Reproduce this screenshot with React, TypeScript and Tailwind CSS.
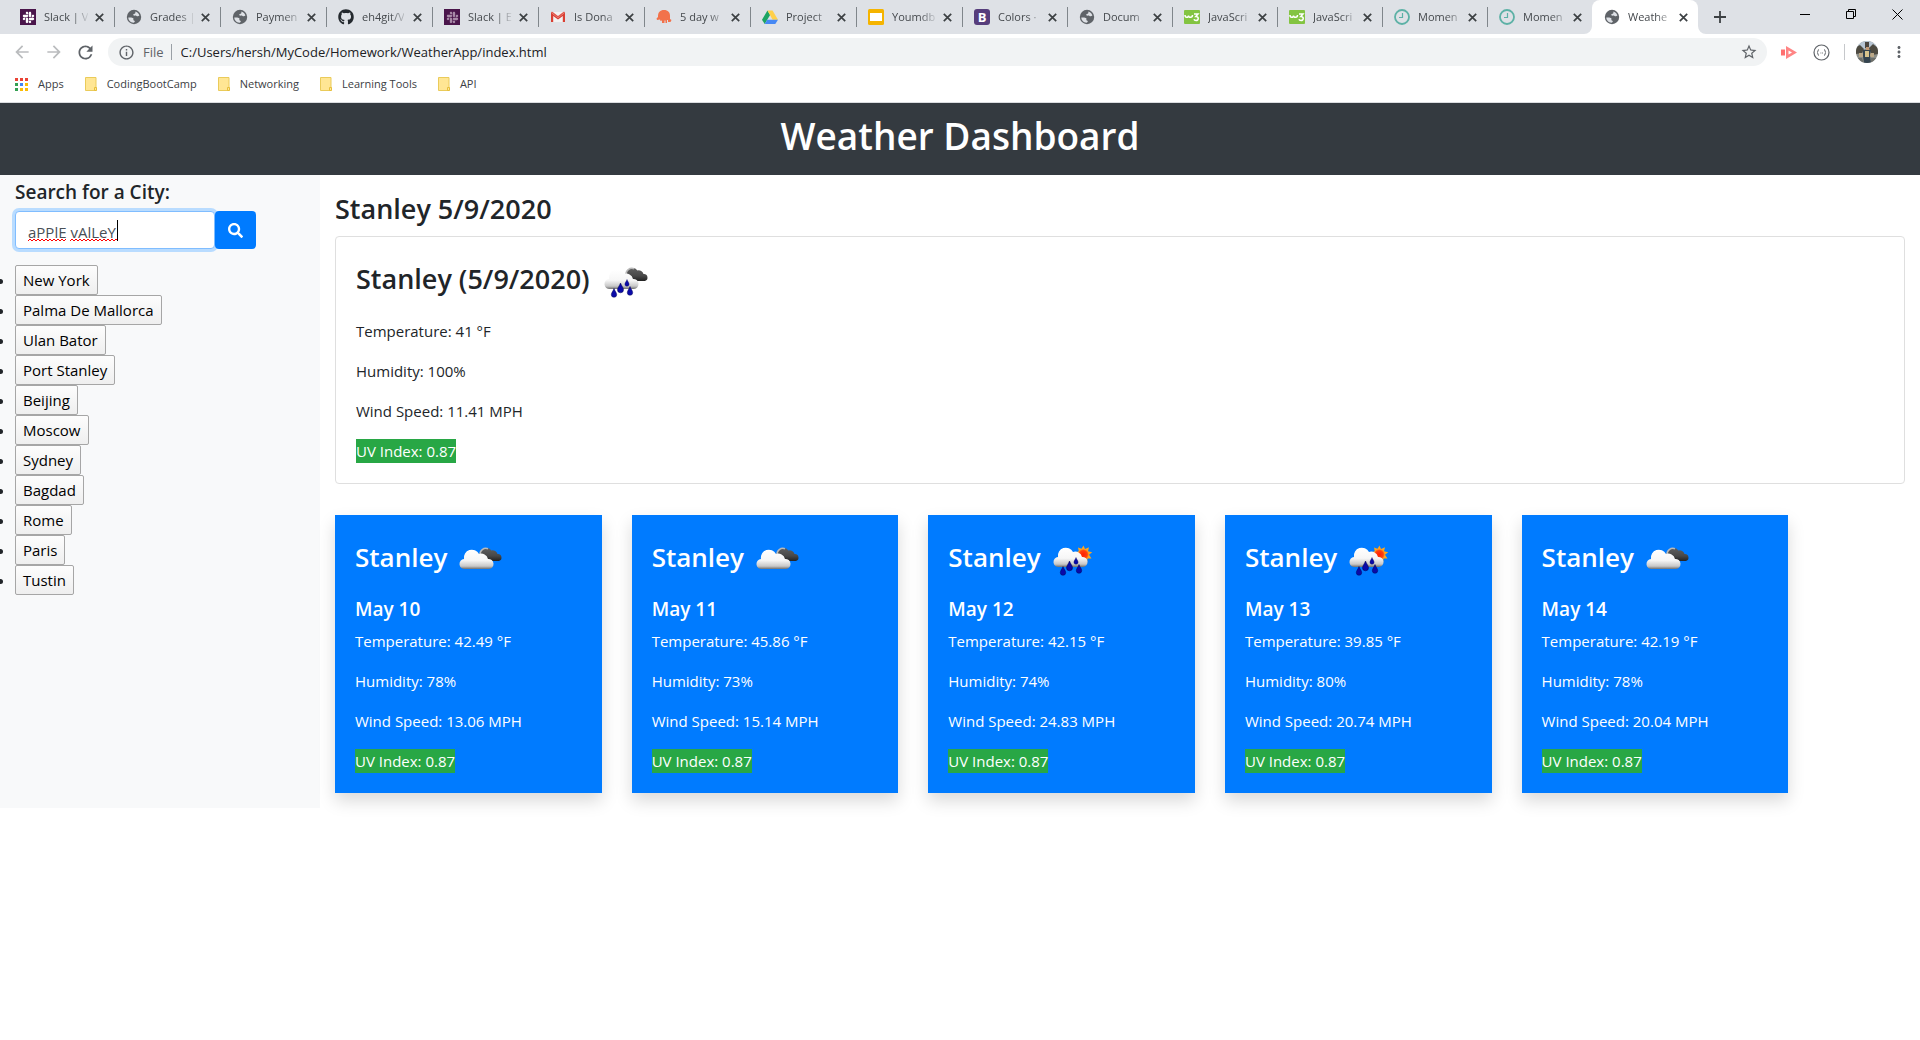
import { useId, type ReactNode } from 'react';
import { FaGithub, FaSlack, FaSearch } from 'react-icons/fa';
import { MdArrowBack, MdArrowForward, MdRefresh, MdStarBorder, MdInfoOutline, MdMoreVert } from 'react-icons/md';

function SlackIcon({ dim }: { dim?: boolean }) {
  return (
    <span className="flex size-4 items-center justify-center bg-[#4a154b]">
      <FaSlack size={13} color={dim ? '#a88aa8' : '#ffffff'} />
    </span>
  );
}

function GlobeIcon() {
  return (
    <svg width="16" height="16" viewBox="0 0 16 16">
      <circle cx="8" cy="8" r="7.200" fill="#5f6368" />
      <path d="M2.300 8.600C4 8.200 6.500 8.300 7.300 9.300c.5.800-.3 1.300.2 1.900.4.500 1.500.3 1.300 1.300-.1.600-.7 1-1.300 1.300C4.500 13.500 2.300 11.300 2.300 8.600z" fill="#dee1e6" />
      <path d="M9.500 2.500c2 .6 3.400 2.200 3.900 4.100-.9.700-2 .9-2.900.3-.8-.5-1.300-.2-2.200-.2-1-.1-1.300-1-.7-1.600.5-.5 1.400-.3 1.700-.9.300-.5-.1-1.100.2-1.700z" fill="#dee1e6" />
    </svg>
  );
}

function GithubIcon() {
  return <FaGithub size={16} color="#24292e" />;
}

function GmailIcon() {
  return (
    <svg width="16" height="16" viewBox="0 0 16 16">
      <path d="M2 3h12v10H2z" fill="#f2f2f2" />
      <path d="M1 13V3.500L8 9l7-5.500V13h-2.200V7L8 10.600 3.200 7v6z" fill="#d93f33" />
      <path d="M1 3.500C1 2.500 2 2.500 2.700 3L8 7l5.300-4C14 2.500 15 2.500 15 3.500L8 9z" fill="#e2574c" />
    </svg>
  );
}

function PostmanIcon() {
  return (
    <svg width="16" height="16" viewBox="0 0 16 16">
      <path d="M8 1c4 0 6 2.500 6 6v3l1.500 1-1 2H12v-2h-1v3H9.500v-2.500h-1V14H6v-2.500L4.500 12 4 10.500 1 11 .5 9.500 2 8V7c0-3.500 2-6 6-6z" fill="#f2724b" />
    </svg>
  );
}

function DriveIcon() {
  return (
    <svg width="16" height="16" viewBox="0 0 17 16">
      <path d="M5.800 1 0 11l2.900 4.500 5.700-9.700z" fill="#1da462" />
      <path d="M5.800 1h5.400L17 11h-5.700z" fill="#ffd04b" />
      <path d="M5.600 11H17l-2.900 4.500H2.900z" fill="#4688f4" />
    </svg>
  );
}

function SlidesIcon() {
  return (
    <svg width="16" height="16" viewBox="0 0 16 16">
      <rect width="16" height="16" rx="1.500" fill="#f5b400" />
      <rect x="2" y="4" width="12" height="8" fill="#fff" />
    </svg>
  );
}

function BootstrapIcon() {
  return (
    <span className="flex size-4 items-center justify-center rounded-[3px] bg-[#563d7c] text-[13px] leading-4 font-bold text-white">B</span>
  );
}

function W3Icon() {
  return (
    <svg width="16" height="16" viewBox="0 0 16 16">
      <rect y="1" width="16" height="14" rx="1" fill="#83c441" />
      <path d="M1 6c0 3 3.500 3 3.500.5C4.500 9 8.500 9 8.500 6M10 5h4l-2.200 2.500C15 7.500 15 11.500 12 11.500c-1 0-1.800-.4-2-1.200" fill="none" stroke="#fff" strokeWidth="1.500" />
    </svg>
  );
}

function MomentIcon() {
  return (
    <svg width="16" height="16" viewBox="0 0 16 16" fill="none" stroke="#5db1a6">
      <circle cx="8" cy="8" r="7" strokeWidth="1.800" />
      <path d="M8.500 4v4.500H5" strokeWidth="1.200" />
    </svg>
  );
}

const tabs: { title: string; icon: ReactNode }[] = [
  { title: 'Slack | V', icon: <SlackIcon /> },
  { title: 'Grades |', icon: <GlobeIcon /> },
  { title: 'Paymen', icon: <GlobeIcon /> },
  { title: 'eh4git/V', icon: <GithubIcon /> },
  { title: 'Slack | E', icon: <SlackIcon dim /> },
  { title: 'Is Dona', icon: <GmailIcon /> },
  { title: '5 day w', icon: <PostmanIcon /> },
  { title: 'Project', icon: <DriveIcon /> },
  { title: 'Youmdb', icon: <SlidesIcon /> },
  { title: 'Colors ·', icon: <BootstrapIcon /> },
  { title: 'Docum', icon: <GlobeIcon /> },
  { title: 'JavaScri', icon: <W3Icon /> },
  { title: 'JavaScri', icon: <W3Icon /> },
  { title: 'Momen', icon: <MomentIcon /> },
  { title: 'Momen', icon: <MomentIcon /> },
  { title: 'Weathe', icon: <GlobeIcon /> },
];

function tabClass(index: number) {
  if (index === tabs.length - 1) return 'relative flex w-[106px] shrink items-center rounded-t-lg bg-white pl-3 pr-[7px]';
  if (index < 9) return 'relative flex w-[106px] shrink items-center pl-3 pr-[7px]';
  return 'relative flex w-[105px] shrink items-center pl-3 pr-[7px]';
}

function TabStrip() {
  return (
    <div className="flex h-[34px] bg-[#dee1e6] pl-2">
      {tabs.map((tab, i) => (
        <div key={i} className={tabClass(i)}>
          {i === tabs.length - 1 && (
            <>
              <svg className="absolute bottom-0 -left-2" width="8" height="8" viewBox="0 0 8 8"><path d="M8 0v8H0a8 8 0 0 0 8-8z" fill="#fff" /></svg>
              <svg className="absolute -right-2 bottom-0" width="8" height="8" viewBox="0 0 8 8"><path d="M0 0v8h8a8 8 0 0 1-8-8z" fill="#fff" /></svg>
            </>
          )}
          <span className="shrink-0">{tab.icon}</span>
          <span className="ml-2 shrink-0 text-[11px] leading-4 whitespace-nowrap text-[#45494d] [mask-image:linear-gradient(to_right,black_28px,transparent_46px)]">
            {tab.title}
          </span>
          <button aria-label="Close tab" className="ml-auto flex size-4 shrink-0 items-center justify-center">
            <svg width="9" height="9" viewBox="0 0 9 9" stroke="#3c4043" strokeWidth="1.700">
              <path d="M.8.8l7.400 7.400M8.200.8.8 8.200" />
            </svg>
          </button>
          {i < tabs.length - 2 && <span className="absolute top-[7px] -right-px h-5 w-px bg-[#80868b]" />}
        </div>
      ))}
      <button aria-label="New tab" className="flex h-[34px] w-11 items-center justify-center">
        <svg width="12" height="12" viewBox="0 0 12 12" stroke="#3c4043" strokeWidth="1.800">
          <path d="M6 0v12M0 6h12" />
        </svg>
      </button>
      <div className="ml-auto flex">
        <button aria-label="Minimize" className="flex h-7 w-[46px] items-center justify-center">
          <svg width="10" height="10" viewBox="0 0 10 10"><path d="M0 5.500h10" stroke="#000" /></svg>
        </button>
        <button aria-label="Restore" className="flex h-7 w-[46px] items-center justify-center">
          <svg width="10" height="10" viewBox="0 0 10 10" fill="none" stroke="#000"><path d="M.5 2.500h7v7h-7zM2.500 2.500v-2h7v7h-2" /></svg>
        </button>
        <button aria-label="Close" className="flex h-7 w-[46px] items-center justify-center">
          <svg width="11" height="11" viewBox="0 0 11 11" stroke="#000"><path d="M.5.5l10 10M10.500.5l-10 10" /></svg>
        </button>
      </div>
    </div>
  );
}

function Toolbar() {
  return (
    <div className="flex h-9 items-center bg-white">
      <button aria-label="Back" className="ml-[11px] flex w-[21px] justify-center text-[#babcbe]"><MdArrowBack size={20} /></button>
      <button aria-label="Forward" className="ml-[11px] flex w-[21px] justify-center text-[#babcbe]"><MdArrowForward size={20} /></button>
      <button aria-label="Reload" className="ml-[11px] flex w-[21px] justify-center text-[#5f6368]"><MdRefresh size={21} /></button>
      <div className="ml-3 flex h-7 min-w-0 flex-1 items-center rounded-full bg-[#f1f3f4] pl-2.5 pr-[9px]">
        <MdInfoOutline size={17} color="#5f6368" />
        <span className="ml-2 text-[13px] text-[#5f6368]">File</span>
        <span className="ml-[7px] h-4 w-px bg-[#9aa0a6]" />
        <input
          aria-label="Address"
          defaultValue="C:/Users/hersh/MyCode/Homework/WeatherApp/index.html"
          className="ml-[9px] min-w-0 flex-1 bg-transparent text-[13px] text-[#202124] outline-none"
        />
        <button aria-label="Bookmark this page" className="text-[#5f6368]"><MdStarBorder size={18} /></button>
      </div>
      <button aria-label="Screen recorder" className="ml-3.5">
        <svg width="16" height="13" viewBox="0 0 16 13">
          <path d="M0 3.500h4v6H0z" fill="#ff7070" />
          <path d="M5 0l11 6.500L5 13V9L5 4zM7.500 4.500v4l3.500-2z" fillRule="evenodd" fill="#ff8585" />
        </svg>
      </button>
      <button aria-label="JSON formatter" className="ml-4">
        <svg width="17" height="17" viewBox="0 0 17 17" fill="none" stroke="#5f6368">
          <circle cx="8.500" cy="8.500" r="7.500" strokeWidth="1.200" />
          <path d="M6 5.500c-1.500 0-.5 2.500-2 3 1.500.5.500 3 2 3M11 5.500c1.500 0 .5 2.500 2 3-1.500.5-.5 3-2 3M7.500 9h.8M9.200 9h.8" />
        </svg>
      </button>
      <span className="ml-3.5 h-4 w-px bg-[#c6c8cb]" />
      <button aria-label="Profile" className="ml-[11px] overflow-hidden rounded-full">
        <svg width="22" height="22" viewBox="0 0 22 22">
          <rect width="22" height="22" fill="#8d8f88" />
          <path d="M0 0h22v7l-5 2-5-3-5 3-7-1z" fill="#b7c5d3" />
          <path d="M0 6l4-2 4 4-2 4-6 1zM13 7l4-4 5 4v6l-6 1z" fill="#4d4a40" />
          <path d="M9 1h4v6H9z" fill="#4b453f" />
          <path d="M3 12h4v4H3zM14 12h4v4h-4z" fill="#bba887" />
          <path d="M7 9h8l-1 5 1 8H8l-1-7z" fill="#35444f" />
          <path d="M9 10h4v6H9z" fill="#d8c48c" />
          <path d="M10 6h3v3h-3z" fill="#c49a76" />
          <path d="M0 17h6l2 5H0zM15 17h7v5h-7z" fill="#6d6f6a" />
        </svg>
      </button>
      <button aria-label="Menu" className="ml-3 mr-3 flex w-[18px] justify-center text-[#5f6368]"><MdMoreVert size={20} /></button>
    </div>
  );
}

const appDots = ['#ea4335', '#ea4335', '#ea4335', '#34a053', '#4285f4', '#fbbc05', '#34a053', '#fbbc05', '#fbbc05'];

function Folder() {
  return (
    <svg width="12" height="14" viewBox="0 0 12 14" className="shrink-0">
      <path d="M.5.5h10.500v13H.5z" fill="#ffe694" stroke="#eacb5a" />
      <path d="M9.500 13.500v-3h2v3z" fill="#ffe694" stroke="#e6bf3c" />
    </svg>
  );
}

function Bookmarks() {
  return (
    <div className="flex h-[33px] items-center gap-[21px] border-b border-[#dadce0] bg-white pb-1 pl-[15px] text-[11px] text-[#3c4043]">
      <a href="#apps" className="flex items-center gap-2.5">
        <span className="grid grid-cols-3 gap-0.5">
          {appDots.map((c, i) => (
            <span key={i} className="size-[3px]" style={{ background: c }} />
          ))}
        </span>
        Apps
      </a>
      <a href="#bootcamp" className="flex items-center gap-2.5"><Folder />CodingBootCamp</a>
      <a href="#networking" className="flex items-center gap-2.5"><Folder />Networking</a>
      <a href="#tools" className="flex items-center gap-2.5"><Folder />Learning Tools</a>
      <a href="#api" className="flex items-center gap-2.5"><Folder />API</a>
    </div>
  );
}

type Sky = 'clouds' | 'rain' | 'sunrain';

const backCloud = 'M25 20a6.500 6.500 0 0 1 11.500-4.500 5 5 0 0 1 6 3.500 3.600 3.600 0 0 1 1.500 7H30z';
const frontCloud = 'M10 34a5 5 0 0 1-1-10 8 8 0 0 1 15-5 7 7 0 0 1 9 5 5 5 0 0 1 1 10z';
const drop = 'M0-5C1-2 3-.5 3 1.800a3 3 0 0 1-6 0C-3-.5-1-2 0-5z';

function WeatherIcon({ sky }: { sky: Sky }) {
  const id = useId();
  return (
    <svg width="50" height="50" viewBox="0 0 50 50" className="shrink-0" role="img" aria-label={sky}>
      <defs>
        <linearGradient id={id + 'w'} x1="0" y1="0" x2="0" y2="1">
          <stop offset="0" stopColor="#fff" />
          <stop offset=".55" stopColor="#f6f6f6" />
          <stop offset=".85" stopColor="#c8c8c8" />
          <stop offset="1" stopColor="#6f6f6f" />
        </linearGradient>
        <linearGradient id={id + 'd'} x1="0" y1="0" x2="0" y2="1">
          <stop offset="0" stopColor="#5f5f5f" />
          <stop offset=".6" stopColor="#484848" />
          <stop offset="1" stopColor="#222" />
        </linearGradient>
        <radialGradient id={id + 's'}>
          <stop offset="0" stopColor="#ff2000" />
          <stop offset=".7" stopColor="#ff4010" />
          <stop offset="1" stopColor="#ffa020" />
        </radialGradient>
      </defs>
      {sky === 'sunrain' ? (
        <g>
          <path
            d="M34.500 10.500l1.500 3.500 4-1.800-1 4 4.200 1-3.200 2.600 2.500 3.600-4 .1-.4 4.300-3.400-2.500-2.700 2.500-1-4-4 .2 2-3.600-3-3 3.800-1.200-.8-3.700 3.500 1.300z"
            fill="#ffa51e"
          />
          <circle cx="34.300" cy="19.500" r="5.600" fill={`url(#${id}s)`} />
        </g>
      ) : (
        <g transform={sky === 'rain' ? 'translate(1 -2)' : 'translate(0 0)'}>
          <path d={backCloud} fill={`url(#${id}d)`} />
          <path d="M25 20a6 6 0 0 1 8-6.300" fill="none" stroke="#b9b9b9" strokeWidth="1.500" />
        </g>
      )}
      <path d={frontCloud} transform={sky === 'clouds' ? undefined : 'translate(0 -2)'} fill={`url(#${id}w)`} />
      {sky !== 'clouds' && (
        <g fill="#0a0aa8" stroke="#000050" strokeWidth=".5">
          <path d={drop} transform="translate(14 36) scale(.9)" />
          <path d={drop} transform="translate(20.500 31)" />
          <path d={drop} transform="translate(27 26) scale(.7)" />
          <path d={drop} transform="translate(30 34) scale(.9)" />
        </g>
      )}
    </svg>
  );
}

const cities = ['New York', 'Palma De Mallorca', 'Ulan Bator', 'Port Stanley', 'Beijing', 'Moscow', 'Sydney', 'Bagdad', 'Rome', 'Paris', 'Tustin'];

function Squiggle({ width }: { width: number }) {
  return (
    <svg width={width} height="4" viewBox={`0 0 ${width} 4`} fill="none" stroke="#f00">
      <path d={'M0 3' + Array.from({ length: Math.ceil(width / 4) }, () => 'l2-2 2 2').join('')} />
    </svg>
  );
}

function Sidebar() {
  return (
    <aside className="w-1/6 shrink-0 bg-[#f8f9fa] px-[15px] pt-[5px]">
      <form>
        <label htmlFor="city" className="mb-[7px] block text-[19px] leading-6 font-semibold">Search for a City:</label>
        <div className="flex h-[38px]">
          <div className="relative w-[200px]">
            <input
              id="city"
              defaultValue="aPPlE vAlLeY"
              spellCheck={false}
              className="h-full w-full rounded-[4px] border border-[#80bdff] bg-white px-3 pt-1 text-[15px] text-[#495057] shadow-[0_0_0_3px_#b9dcff] outline-none"
            />
            <span className="pointer-events-none absolute top-[27px] left-[13px] flex gap-1"><Squiggle width={38} /><Squiggle width={48} /></span>
            <span className="pointer-events-none absolute top-[9px] left-[102px] h-[21px] w-px bg-black" />
          </div>
          <button type="button" aria-label="Search" className="relative flex w-[41px] items-center justify-center rounded-[4px] bg-[#007bff] text-white">
            <FaSearch size={15} />
          </button>
        </div>
      </form>
      <ul className="mt-4 list-disc">
        {cities.map((city) => (
          <li key={city} className="h-[30px]">
            <button className="h-[30px] rounded-[2px] border border-[#a6a6a6] bg-linear-to-b from-[#fdfdfd] to-[#efefef] px-[7px] text-[15px] leading-7 text-black">
              {city}
            </button>
          </li>
        ))}
      </ul>
    </aside>
  );
}

function Readings({ temp, humidity, wind }: { temp: string; humidity: string; wind: string }) {
  return (
    <div className="flex flex-col items-start gap-4">
      <p>Temperature: {temp} °F</p>
      <p>Humidity: {humidity}%</p>
      <p>Wind Speed: {wind} MPH</p>
      <p className="bg-[#28a745] text-white">UV Index: 0.87</p>
    </div>
  );
}

const forecast: { day: string; sky: Sky; temp: string; humidity: string; wind: string }[] = [
  { day: 'May 10', sky: 'clouds', temp: '42.49', humidity: '78', wind: '13.06' },
  { day: 'May 11', sky: 'clouds', temp: '45.86', humidity: '73', wind: '15.14' },
  { day: 'May 12', sky: 'sunrain', temp: '42.15', humidity: '74', wind: '24.83' },
  { day: 'May 13', sky: 'sunrain', temp: '39.85', humidity: '80', wind: '20.74' },
  { day: 'May 14', sky: 'clouds', temp: '42.19', humidity: '78', wind: '20.04' },
];

export default function App() {
  return (
    <div className="min-h-screen bg-white font-['Open_Sans',sans-serif] text-[15px] leading-6 text-[#212529]">
      <TabStrip />
      <Toolbar />
      <Bookmarks />
      <header className="bg-[#343a40] pt-[9px] pb-[15px] text-center text-white">
        <h1 className="text-[37px] leading-[48px] font-semibold">Weather Dashboard</h1>
      </header>
      <div className="flex">
        <Sidebar />
        <main className="min-w-0 flex-1 px-[15px] pt-[17px] pb-[15px]">
          <h3 className="mb-2.5 text-[27px] leading-[34px] font-semibold">Stanley 5/9/2020</h3>
          <section className="rounded-[4px] border border-[#dfdfdf] p-5">
            <h3 className="mb-2 flex h-[54px] items-start gap-2.5 text-[27px] leading-[44px] font-semibold">
              Stanley (5/9/2020)
              <WeatherIcon sky="rain" />
            </h3>
            <Readings temp="41" humidity="100" wind="11.41" />
          </section>
          <div className="-mx-[15px] mt-[31px] flex">
            {forecast.map((f) => (
              <article key={f.day} className="mx-[15px] w-1/6 bg-[#007bff] p-5 text-white shadow-[0_8px_16px_rgba(0,0,0,0.15)]">
                <h3 className="mb-2 flex h-[54px] items-start gap-2 text-[26px] leading-[44px] font-semibold">
                  Stanley
                  <WeatherIcon sky={f.sky} />
                </h3>
                <h5 className="mb-2 text-[19px] leading-6 font-semibold">{f.day}</h5>
                <Readings temp={f.temp} humidity={f.humidity} wind={f.wind} />
              </article>
            ))}
          </div>
        </main>
      </div>
    </div>
  );
}
